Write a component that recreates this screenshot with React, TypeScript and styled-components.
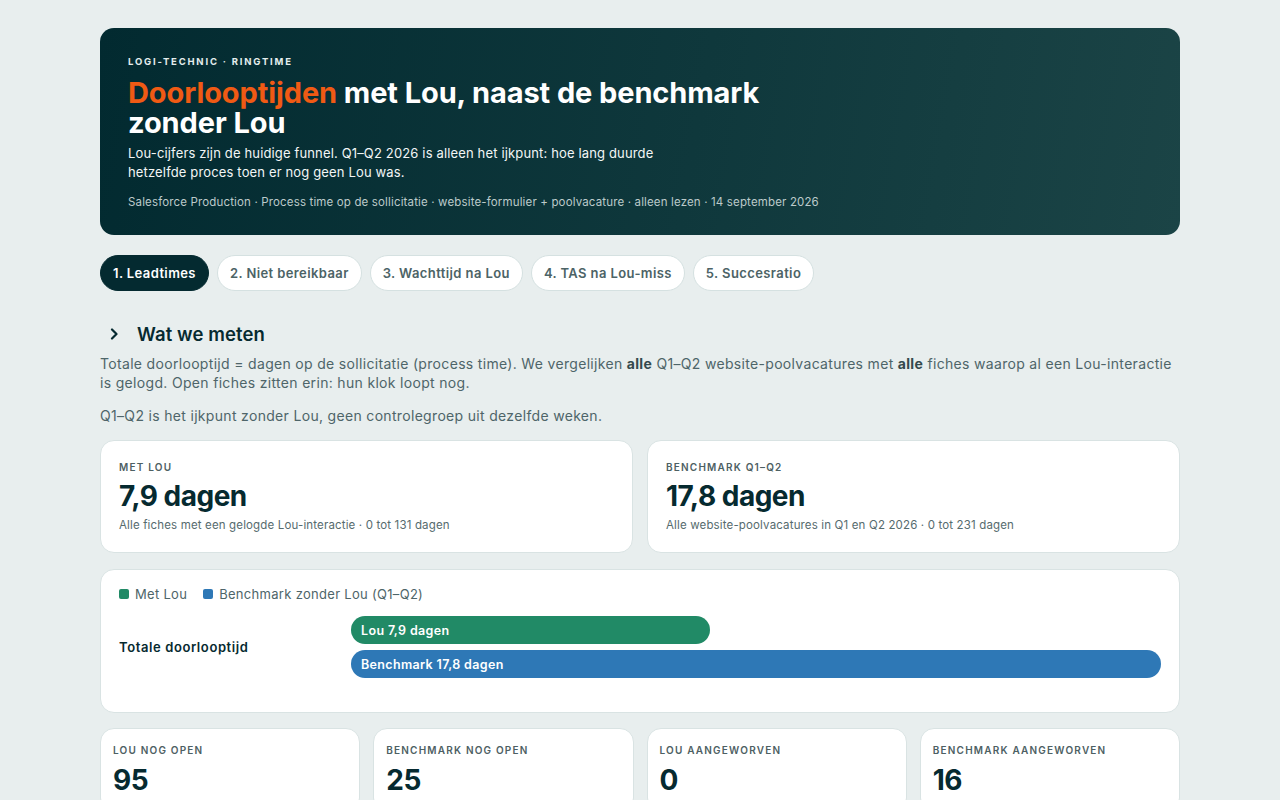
import styled, { createGlobalStyle } from "styled-components";

const GlobalStyle = createGlobalStyle`
	* { box-sizing: border-box; }
	body {
		margin: 0;
		background: #e8eeee;
		font-family: "Inter", "Open Sans", sans-serif;
		color: #0a2c31;
	}
`;

const Page = styled.div`
	width: 1080px;
	margin: 0 auto;
	padding: 28px 0 40px;
	display: flex;
	flex-direction: column;
`;

const Hero = styled.header`
	background: linear-gradient(100deg, #022a30 0%, #0f383c 55%, #1b4446 100%);
	border-radius: 14px;
	padding: 28px 28px 26px;
	color: #ffffff;
`;

const Eyebrow = styled.div`
	font-size: 9.5px;
	font-weight: 700;
	letter-spacing: 1.8px;
	text-transform: uppercase;
	color: #e4eded;
`;

const Title = styled.h1`
	margin: 11px 0 6px;
	max-width: 680px;
	font-size: 29px;
	line-height: 30px;
	font-weight: 700;
	letter-spacing: -0.1px;
`;

const Accent = styled.span`
	color: #f05a14;
`;

const Lead = styled.p`
	margin: 0;
	max-width: 560px;
	font-size: 13px;
	line-height: 19px;
	letter-spacing: 0.15px;
	color: #f2f6f6;
`;

const Meta = styled.div`
	margin-top: 13px;
	font-size: 11.5px;
	letter-spacing: 0.15px;
	color: #bccaca;
`;

const Tabs = styled.nav`
	display: flex;
	gap: 8px;
	margin-top: 20px;
`;

const Tab = styled.button<{ $active?: boolean }>`
	height: 36px;
	padding: 0 12px;
	border-radius: 18px;
	border: 1px solid ${({ $active }) => ($active ? "#042a30" : "#d5e1e1")};
	background: ${({ $active }) => ($active ? "#042a30" : "#ffffff")};
	color: ${({ $active }) => ($active ? "#ffffff" : "#4c6366")};
	font-family: inherit;
	font-size: 13px;
	font-weight: 600;
	letter-spacing: 0.4px;
	cursor: pointer;
`;

const Section = styled.details`
	margin-top: 30px;
`;

const Summary = styled.summary`
	display: flex;
	align-items: center;
	gap: 18px;
	padding-left: 9px;
	height: 26px;
	list-style: none;
	font-size: 18.5px;
	font-weight: 600;
	letter-spacing: 0.1px;
	color: #062a30;
	cursor: pointer;
	&::-webkit-details-marker {
		display: none;
	}
`;

const Body = styled.p`
	margin: 7px 0 0;
	font-size: 14px;
	line-height: 19px;
	letter-spacing: 0.32px;
	color: #4e6569;
	& + & {
		margin-top: 14px;
	}
	& b {
		font-weight: 700;
		color: #34494c;
	}
`;

const Grid = styled.div<{ $cols: number; $gap: number; $top: number }>`
	display: grid;
	grid-template-columns: repeat(${({ $cols }) => $cols}, 1fr);
	gap: ${({ $gap }) => $gap}px;
	margin-top: ${({ $top }) => $top}px;
`;

const Card = styled.div<{ $pad?: string }>`
	background: #ffffff;
	border: 1px solid #d9e3e3;
	border-radius: 14px;
	padding: ${({ $pad }) => $pad ?? "18px"};
`;

const StatLabel = styled.div`
	font-size: 10px;
	line-height: 15px;
	font-weight: 600;
	letter-spacing: 1.2px;
	text-transform: uppercase;
	color: #4d6063;
`;

const StatValue = styled.div<{ $gap?: number }>`
	margin-top: ${({ $gap }) => $gap ?? 4}px;
	font-size: 28px;
	line-height: 34px;
	font-weight: 700;
	letter-spacing: -0.5px;
	color: #062a30;
`;

const StatNote = styled.div`
	margin-top: 4px;
	font-size: 11.5px;
	line-height: 16px;
	letter-spacing: 0.15px;
	color: #566b6e;
`;

const Legend = styled.div`
	display: flex;
	gap: 16px;
	font-size: 13px;
	letter-spacing: 0.3px;
	color: #4e6569;
`;

const LegendItem = styled.span<{ $color: string }>`
	display: inline-flex;
	align-items: center;
	gap: 6px;
	&::before {
		content: "";
		width: 10px;
		height: 10px;
		border-radius: 2px;
		background: ${({ $color }) => $color};
	}
`;

const ChartRow = styled.div`
	display: grid;
	grid-template-columns: 232px 1fr;
	align-items: center;
	margin: 14px 0 16px;
`;

const RowLabel = styled.div`
	font-size: 13px;
	font-weight: 600;
	letter-spacing: 0.6px;
	color: #062a30;
`;

const Bars = styled.div`
	display: flex;
	flex-direction: column;
	gap: 6px;
`;

const Bar = styled.div<{ $color: string }>`
	height: 28px;
	border-radius: 14px;
	background: ${({ $color }) => $color};
	color: #ffffff;
	font-size: 12.5px;
	font-weight: 600;
	letter-spacing: 0.35px;
	display: flex;
	align-items: center;
	padding: 0 10px;
	white-space: nowrap;
`;

const Chevron = () => (
	<svg width="10" height="12" viewBox="0 0 10 12" fill="none">
		<path d="M3 1.5 L7.5 6 L3 10.5" stroke="#062a30" strokeWidth="2.2" strokeLinecap="round" strokeLinejoin="round" />
	</svg>
);

const tabs = [
	"1. Leadtimes",
	"2. Niet bereikbaar",
	"3. Wachttijd na Lou",
	"4. TAS na Lou-miss",
	"5. Succesratio",
];

const leadStats = [
	{ label: "Met Lou", value: "7,9 dagen", note: "Alle fiches met een gelogde Lou-interactie · 0 tot 131 dagen" },
	{ label: "Benchmark Q1–Q2", value: "17,8 dagen", note: "Alle website-poolvacatures in Q1 en Q2 2026 · 0 tot 231 dagen" },
];

const counts = [
	{ label: "Lou nog open", value: "95" },
	{ label: "Benchmark nog open", value: "25" },
	{ label: "Lou aangeworven", value: "0" },
	{ label: "Benchmark aangeworven", value: "16" },
];

const LOU = 7.9;
const BENCH = 17.8;

const App = () => {
	const max = Math.max(LOU, BENCH);
	return (
		<>
			<GlobalStyle />
			<Page>
				<Hero>
					<Eyebrow>Logi-Technic · Ringtime</Eyebrow>
					<Title>
						<Accent>Doorlooptijden</Accent> met Lou, naast de benchmark zonder Lou
					</Title>
					<Lead>
						Lou-cijfers zijn de huidige funnel. Q1–Q2 2026 is alleen het ijkpunt: hoe lang duurde
						hetzelfde proces toen er nog geen Lou was.
					</Lead>
					<Meta>
						Salesforce Production · Process time op de sollicitatie · website-formulier + poolvacature ·
						alleen lezen · 14 september 2026
					</Meta>
				</Hero>

				<Tabs>
					{tabs.map((t, i) => (
						<Tab key={t} $active={i === 0}>
							{t}
						</Tab>
					))}
				</Tabs>

				<Section open>
					<Summary>
						<Chevron />
						Wat we meten
					</Summary>
					<Body>
						Totale doorlooptijd = dagen op de sollicitatie (process time). We vergelijken <b>alle</b> Q1–Q2
						website-poolvacatures met <b>alle</b> fiches waarop al een Lou-interactie is gelogd. Open fiches
						zitten erin: hun klok loopt nog.
					</Body>
					<Body>Q1–Q2 is het ijkpunt zonder Lou, geen controlegroep uit dezelfde weken.</Body>
				</Section>

				<Grid $cols={2} $gap={14} $top={15}>
					{leadStats.map((s) => (
						<Card key={s.label} $pad="19px 18px 19px">
							<StatLabel>{s.label}</StatLabel>
							<StatValue>{s.value}</StatValue>
							<StatNote>{s.note}</StatNote>
						</Card>
					))}
				</Grid>

				<Grid $cols={1} $gap={0} $top={16}>
					<Card $pad="16px 18px 18px">
						<Legend>
							<LegendItem $color="#218a66">Met Lou</LegendItem>
							<LegendItem $color="#2e78b6">Benchmark zonder Lou (Q1–Q2)</LegendItem>
						</Legend>
						<ChartRow>
							<RowLabel>Totale doorlooptijd</RowLabel>
							<Bars>
								<Bar $color="#218a66" style={{ width: `${(LOU / max) * 100}%` }}>
									Lou 7,9 dagen
								</Bar>
								<Bar $color="#2e78b6" style={{ width: `${(BENCH / max) * 100}%` }}>
									Benchmark 17,8 dagen
								</Bar>
							</Bars>
						</ChartRow>
					</Card>
				</Grid>

				<Grid $cols={4} $gap={13} $top={15}>
					{counts.map((c) => (
						<Card key={c.label} $pad="14px 12px">
							<StatLabel>{c.label}</StatLabel>
							<StatValue $gap={5}>{c.value}</StatValue>
						</Card>
					))}
				</Grid>
			</Page>
		</>
	);
};

export default App;
